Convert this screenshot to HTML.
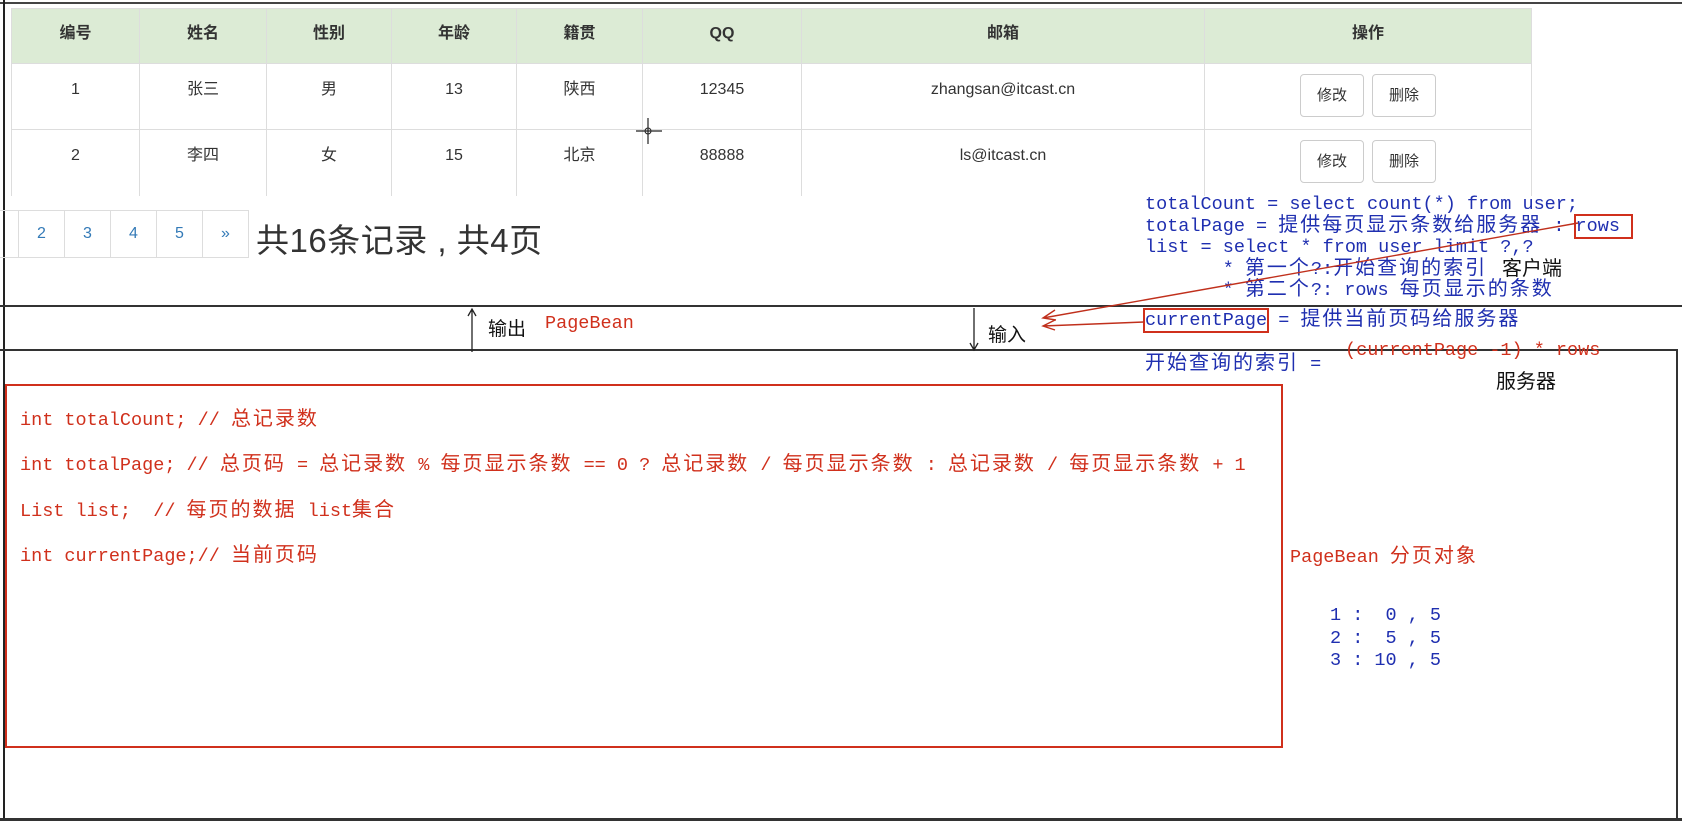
<!DOCTYPE html>
<html><head><meta charset="utf-8"><style>
*{margin:0;padding:0;box-sizing:border-box}
body{width:1682px;height:821px;background:#fff;position:relative;overflow:hidden;font-family:"Liberation Sans","Noto Sans CJK SC",sans-serif}
.a{position:absolute;white-space:pre}
table{position:absolute;left:11px;top:8px;border-collapse:collapse;font-size:16px;color:#333}
td,th{border:1px solid #ddd;text-align:center;line-height:20px}
th{background:#dcebd5;height:55px;font-weight:bold;padding-bottom:4px}
td{height:66px;vertical-align:top;padding-top:16px}
.btn{display:inline-block;width:64px;height:43px;border:1px solid #ccc;border-radius:4px;line-height:41px;font-size:15px;margin:-6px 4px 0;background:#fff}
.pg{position:absolute;top:210px;height:48px;width:47px;border:1px solid #ddd;color:#337ab7;text-align:center;line-height:46px;font-size:16px}
.m{font-family:"Liberation Mono","Noto Sans CJK SC",monospace;font-size:18.5px}
.c{font-family:"Noto Sans CJK SC",sans-serif;font-size:20px;letter-spacing:2px;line-height:10px}
.blue{color:#1f2fb0}
.red{color:#d0301c}
.bx{border:2px solid #d0301c;margin:0 -2px;line-height:10px}
</style></head><body>
<div class="a" style="left:0;top:2px;width:1682px;height:2px;background:#444"></div>
<div class="a" style="left:3px;top:0;width:2px;height:821px;background:#222"></div>
<table>
<tr><th style="width:128px">编号</th><th style="width:127px">姓名</th><th style="width:125px">性别</th><th style="width:125px">年龄</th><th style="width:126px">籍贯</th><th style="width:159px">QQ</th><th style="width:403px">邮箱</th><th style="width:327px">操作</th></tr>
<tr><td>1</td><td>张三</td><td>男</td><td>13</td><td>陕西</td><td>12345</td><td>zhangsan@itcast.cn</td><td><span class="btn">修改</span><span class="btn">删除</span></td></tr>
<tr><td style="border-bottom:none">2</td><td style="border-bottom:none">李四</td><td style="border-bottom:none">女</td><td style="border-bottom:none">15</td><td style="border-bottom:none">北京</td><td style="border-bottom:none">88888</td><td style="border-bottom:none">ls@itcast.cn</td><td style="border-bottom:none"><span class="btn">修改</span><span class="btn">删除</span></td></tr>
</table>
<div class="pg" style="left:-28px"></div>
<div class="pg" style="left:18px">2</div>
<div class="pg" style="left:64px">3</div>
<div class="pg" style="left:110px">4</div>
<div class="pg" style="left:156px">5</div>
<div class="pg" style="left:202px">»</div>
<div class="a" style="left:256px;top:214px;font-size:33px;color:#333;letter-spacing:0.5px">共16条记录 , 共4页</div>

<div class="a" style="left:0;top:305px;width:1682px;height:2px;background:#333"></div>
<div class="a" style="left:0;top:349px;width:1678px;height:2px;background:#333"></div>
<div class="a" style="left:1676px;top:349px;width:2px;height:472px;background:#333"></div>
<div class="a" style="left:0;top:818px;width:1682px;height:3px;background:#333"></div>

<div class="a" style="left:488px;top:314px;font-size:19px;color:#111">输出</div>
<div class="a m red" style="left:545px;top:313px">PageBean</div>
<div class="a" style="left:988px;top:320px;font-size:19px;color:#111">输入</div>

<div class="a m blue" style="left:1145px;top:194px;line-height:21.5px">totalCount = select count(*) from user;
totalPage = <span class="c">提供每页显示条数给服务器</span> : <span class="bx">rows </span>
list = select * from user limit ?,?
       * <span class="c">第一个</span>?:<span class="c">开始查询的索引</span>
       * <span class="c">第二个</span>?: rows <span class="c">每页显示的条数</span></div>
<div class="a m blue" style="left:1145px;top:310px;line-height:22px"><span class="bx">currentPage</span> = <span class="c">提供当前页码给服务器</span></div>
<div class="a m blue" style="left:1145px;top:354px;line-height:22px"><span class="c">开始查询的索引</span> =</div>
<div class="a m red" style="left:1345px;top:340px">(currentPage -1) * rows</div>
<div class="a" style="left:1502px;top:252px;font-size:20px;color:#111">客户端</div>
<div class="a" style="left:1496px;top:365px;font-size:20px;color:#111">服务器</div>

<div class="a" style="left:5px;top:384px;width:1278px;height:364px;border:2px solid #d0301c"></div>
<div class="a m red" style="left:20px;top:398px;line-height:45.3px">int totalCount; // <span class="c">总记录数</span>
int totalPage; // <span class="c">总页码</span> = <span class="c">总记录数</span> % <span class="c">每页显示条数</span> == 0 ? <span class="c">总记录数</span> / <span class="c">每页显示条数</span> : <span class="c">总记录数</span> / <span class="c">每页显示条数</span> + 1
List list;  // <span class="c">每页的数据</span> list<span class="c">集合</span>
int currentPage;// <span class="c">当前页码</span></div>
<div class="a m red" style="left:1290px;top:547px;line-height:22px">PageBean <span class="c">分页对象</span></div>
<div class="a m blue" style="left:1330px;top:605px;line-height:22.5px">1 :  0 , 5
2 :  5 , 5
3 : 10 , 5</div>

<svg class="a" style="left:0;top:0" width="1682" height="821">
<g stroke="#222" stroke-width="1.3" fill="none">
<path d="M472 352V309M468 316L472 309L476 316"/>
<path d="M974 308V350M970 343L974 350L978 343"/>
</g>
<g stroke="#c0301c" stroke-width="1.4" fill="none">
<path d="M1578 223L1043 318M1055 310L1043 318L1056 320"/>
<path d="M1144 322L1043 326M1055 320L1043 326L1055 330"/>
</g>
<g stroke="#222" stroke-width="1.2"><path d="M648 118V144M636 131H662"/></g>
<circle cx="648" cy="131" r="3" fill="none" stroke="#222"/>
</svg>
</body></html>
